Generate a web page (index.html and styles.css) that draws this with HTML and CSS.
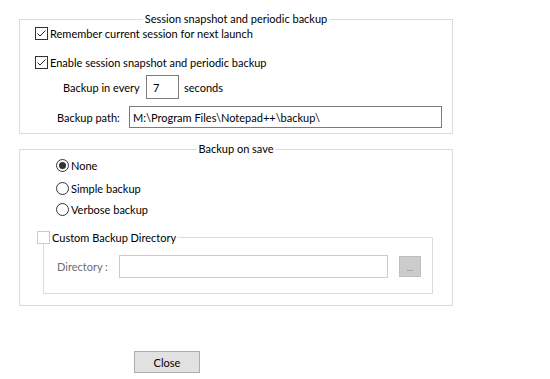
FILE: index.html
```html
<!DOCTYPE html>
<html lang="en">
<head>
    <meta charset="UTF-8">
    <title>Backup</title>
    <link rel="stylesheet" href="styles.css">
</head>
<body>

<div class="dialog">
    <section class="group session">
        <span class="group-title">Session snapshot and periodic backup</span>
        <label class="check">
            <span class="box"><svg width="11" height="11" viewBox="0 0 11 11"><path d="M1.5 5.5 L4 8 L9.5 2.5" fill="none" stroke="#222" stroke-width="1"/></svg></span>
            Remember current session for next launch
        </label>
        <label class="check">
            <span class="box"><svg width="11" height="11" viewBox="0 0 11 11"><path d="M1.5 5.5 L4 8 L9.5 2.5" fill="none" stroke="#222" stroke-width="1"/></svg></span>
            Enable session snapshot and periodic backup
        </label>
        <div class="row interval">
            <span class="label">Backup in every</span>
            <span class="field num">7</span>
            <span class="unit">seconds</span>
        </div>
        <div class="row path">
            <span class="label">Backup path:</span>
            <span class="field path-field">M:\Program Files\Notepad++\backup\</span>
        </div>
    </section>

    <section class="group save">
        <span class="group-title">Backup on save</span>
        <label class="radio"><span class="dot on"></span>None</label>
        <label class="radio"><span class="dot"></span>Simple backup</label>
        <label class="radio"><span class="dot"></span>Verbose backup</label>

        <div class="subgroup">
            <label class="check sub-title"><span class="box off"></span>Custom Backup Directory</label>
            <div class="row dir">
                <span class="label muted">Directory :</span>
                <span class="field off wide"></span>
                <span class="browse">...</span>
            </div>
        </div>
    </section>

    <div class="actions">
        <button class="close" type="button">Close</button>
    </div>
</div>

</body>
</html>
```

FILE: styles.css
```css
body {
    margin: 0;
    font-family: Lato, "Liberation Sans", Arial, sans-serif;
    font-size: 11px;
    color: #000000;
    background-color: #ffffff;
    white-space: nowrap;
}
.dialog {
    width: 550px;
    height: 379px;
    padding-top: 19px;
    box-sizing: border-box;
}
.group {
    position: relative;
    margin-left: 19px;
    width: 434px;
    box-sizing: border-box;
    border: 1px solid #dcdcdc;
}
.group-title {
    position: absolute;
    top: -8px;
    left: 50%;
    transform: translateX(-50%);
    background-color: #ffffff;
    padding: 0 2px;
    line-height: 14px;
}

/* check boxes and radios */
.check {
    display: flex;
    align-items: center;
    height: 13px;
    line-height: 13px;
}
.box {
    flex: none;
    display: flex;
    width: 13px;
    height: 13px;
    box-sizing: border-box;
    border: 1px solid #333333;
    margin-right: 2px;
}
.box.off {
    border-color: #cccccc;
}
.radio {
    display: flex;
    align-items: center;
    height: 13px;
}
.dot {
    flex: none;
    width: 13px;
    height: 13px;
    box-sizing: border-box;
    border: 1px solid #333333;
    border-radius: 50%;
    margin-right: 2px;
    display: flex;
    align-items: center;
    justify-content: center;
}
.dot.on::after {
    content: "";
    width: 7px;
    height: 7px;
    border-radius: 50%;
    background-color: #333333;
}

/* text fields */
.row {
    display: flex;
    align-items: center;
}
.field {
    box-sizing: border-box;
    border: 1px solid #7a7a7a;
    background-color: #ffffff;
    display: flex;
    align-items: center;
}
.field.off {
    border-color: #cccccc;
}

/* session snapshot group */
.session {
    padding: 7px 0 5px 15px;
}
.session .check + .check {
    margin-top: 16px;
}
.interval {
    margin-top: 6px;
    height: 24px;
}
.interval .label {
    margin-left: 28px;
    width: 83px;
}
.num {
    width: 33px;
    height: 24px;
    padding-left: 6px;
}
.unit {
    margin-left: 5px;
}
.path {
    margin-top: 7px;
    height: 22px;
}
.path .label {
    margin-left: 22px;
    width: 72px;
}
.path-field {
    width: 313px;
    height: 22px;
    padding-left: 3px;
}

/* backup on save group */
.save {
    margin-top: 15px;
    padding: 9px 0 11px 36px;
}
.radio + .radio {
    margin-top: 10px;
}
.radio + .radio + .radio {
    margin-top: 8px;
}
.subgroup {
    position: relative;
    margin: 21px 0 0 -13px;
    width: 390px;
    height: 57px;
    box-sizing: border-box;
    border: 1px solid #dcdcdc;
    padding: 17px 0 0 13px;
}
.sub-title {
    position: absolute;
    top: -7px;
    left: -7px;
    background-color: #ffffff;
    padding-right: 2px;
}
.dir {
    height: 23px;
}
.muted {
    color: #6d6d6d;
}
.dir .label {
    width: 62px;
}
.wide {
    width: 269px;
    height: 23px;
}
.browse {
    margin-left: 11px;
    width: 22px;
    height: 21px;
    box-sizing: border-box;
    border: 1px solid #bfbfbf;
    background-color: #cccccc;
    color: #8a8a8a;
    font-size: 9px;
    display: flex;
    align-items: center;
    justify-content: center;
    padding-top: 2px;
}

/* footer */
.actions {
    margin: 45px 0 0 134px;
}
.close {
    width: 66px;
    height: 22px;
    padding: 0;
    border: 1px solid #adadad;
    background-color: #e1e1e1;
    font-family: Lato, "Liberation Sans", Arial, sans-serif;
    font-size: 11px;
    color: #000000;
}
```
